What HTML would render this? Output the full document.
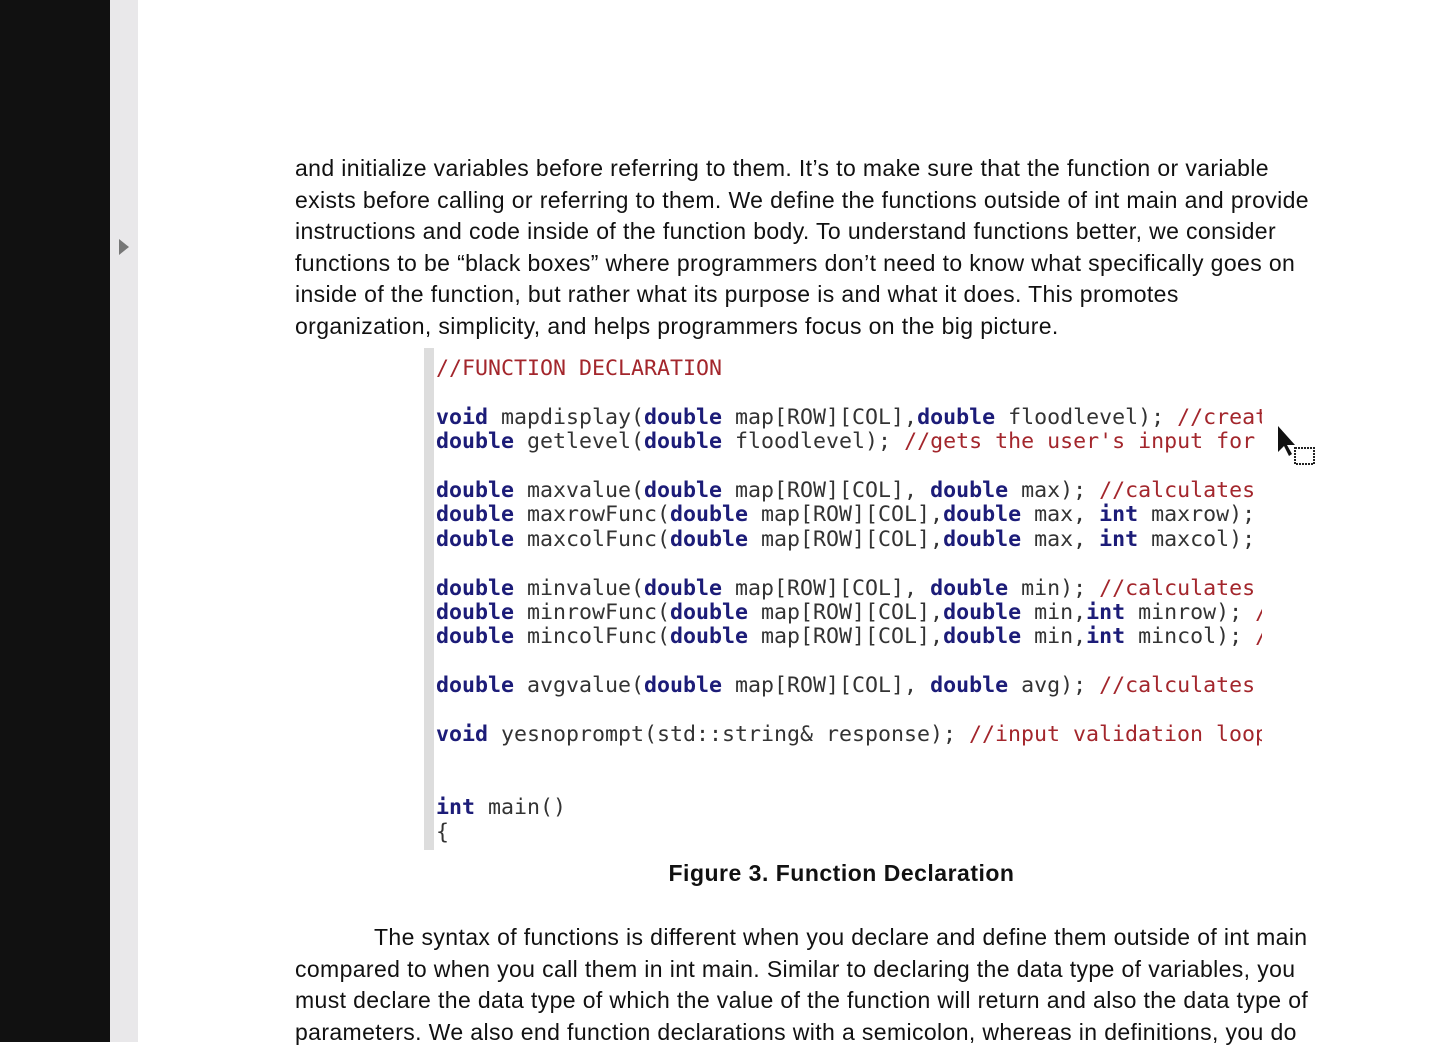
<!DOCTYPE html>
<html><head><meta charset="utf-8"><style>
body{margin:0;width:1452px;height:1042px;overflow:hidden;background:#fff;position:relative;font-family:"Liberation Sans",Arial,sans-serif}
.blk{position:absolute;left:0;top:0;width:110px;height:1042px;background:#111}
.gry{position:absolute;left:110px;top:0;width:28px;height:1042px;background:#e9e8ea}
.tri{position:absolute;left:119px;top:239px;width:0;height:0;border-top:8px solid transparent;border-bottom:8px solid transparent;border-left:10px solid #777}
.p{position:absolute;left:295px;font-size:23px;letter-spacing:0.38px;color:#111;line-height:31.6px;white-space:nowrap}
.code{position:absolute;left:436px;top:357px;width:826px;overflow:hidden;font-family:"DejaVu Sans Mono",monospace;font-size:21.6px;line-height:24.4px;color:#333;white-space:pre}
.k{color:#1c1c78;font-weight:bold}.c{color:#a3262c}
.bar{position:absolute;left:424px;top:348px;width:10px;height:502px;background:#ddd}
.cap{position:absolute;left:0;width:1683px;text-align:center;top:860px;font-size:23px;letter-spacing:0.5px;font-weight:bold;color:#111}
</style></head><body>
<div class="blk"></div><div class="gry"></div><div class="tri"></div>
<div class="p" style="top:153px">and initialize variables before referring to them. It’s to make sure that the function or variable<br>exists before calling or referring to them. We define the functions outside of int main and provide<br>instructions and code inside of the function body. To understand functions better, we consider<br>functions to be “black boxes” where programmers don’t need to know what specifically goes on<br>inside of the function, but rather what its purpose is and what it does. This promotes<br>organization, simplicity, and helps programmers focus on the big picture.</div>
<div class="bar"></div>
<div class="code"><span class="c">//FUNCTION DECLARATION</span>

<span class="k">void</span> mapdisplay(<span class="k">double</span> map[ROW][COL],<span class="k">double</span> floodlevel); <span class="c">//creates</span>
<span class="k">double</span> getlevel(<span class="k">double</span> floodlevel); <span class="c">//gets the user's input for</span>

<span class="k">double</span> maxvalue(<span class="k">double</span> map[ROW][COL], <span class="k">double</span> max); <span class="c">//calculates</span>
<span class="k">double</span> maxrowFunc(<span class="k">double</span> map[ROW][COL],<span class="k">double</span> max, <span class="k">int</span> maxrow);
<span class="k">double</span> maxcolFunc(<span class="k">double</span> map[ROW][COL],<span class="k">double</span> max, <span class="k">int</span> maxcol);

<span class="k">double</span> minvalue(<span class="k">double</span> map[ROW][COL], <span class="k">double</span> min); <span class="c">//calculates</span>
<span class="k">double</span> minrowFunc(<span class="k">double</span> map[ROW][COL],<span class="k">double</span> min,<span class="k">int</span> minrow); <span class="c">//</span>
<span class="k">double</span> mincolFunc(<span class="k">double</span> map[ROW][COL],<span class="k">double</span> min,<span class="k">int</span> mincol); <span class="c">//</span>

<span class="k">double</span> avgvalue(<span class="k">double</span> map[ROW][COL], <span class="k">double</span> avg); <span class="c">//calculates</span>

<span class="k">void</span> yesnoprompt(std::string&amp; response); <span class="c">//input validation loop</span>


<span class="k">int</span> main()
{</div>
<svg style="position:absolute;left:1276px;top:424px" width="42" height="44"><path d="M2 2 L2 28 L8 22 L13 32 L16 30 L11 21 L19 21 Z" fill="#111"/><rect x="19" y="24" width="19" height="16" fill="none" stroke="#222" stroke-width="2" stroke-dasharray="2 1"/></svg>
<div class="cap">Figure 3. Function Declaration</div>
<div class="p" style="top:922px"><span style="display:inline-block;width:79px"></span>The syntax of functions is different when you declare and define them outside of int main<br>compared to when you call them in int main. Similar to declaring the data type of variables, you<br>must declare the data type of which the value of the function will return and also the data type of<br>parameters. We also end function declarations with a semicolon, whereas in definitions, you do</div>
</body></html>
